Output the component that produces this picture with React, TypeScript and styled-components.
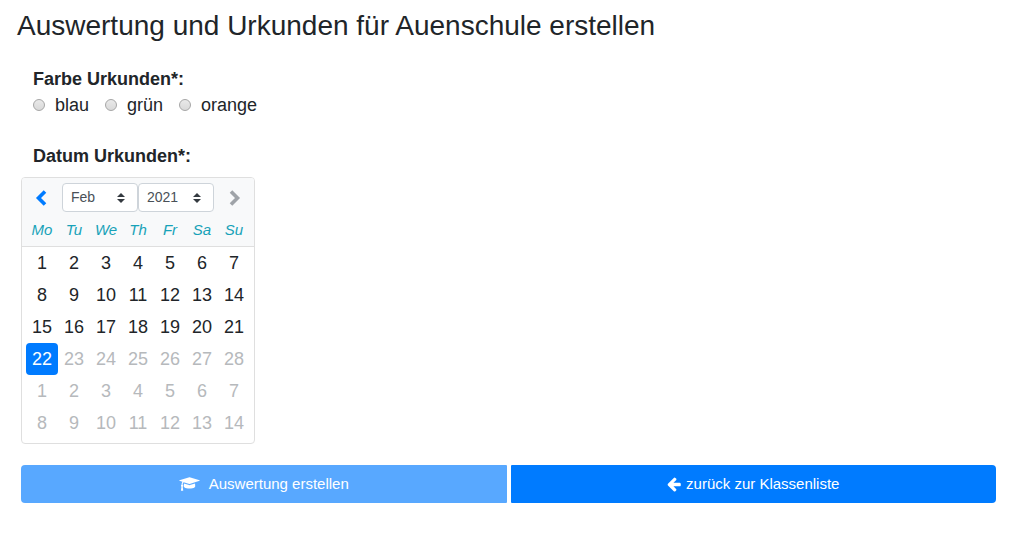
import React, { useState } from "react";
import styled, { createGlobalStyle } from "styled-components";

const GlobalStyle = createGlobalStyle`
  *, *::before, *::after { box-sizing: border-box; }
  body {
    margin: 0;
    background: #fff;
    color: #212529;
    font-family: "Liberation Sans", Arial, sans-serif;
    font-size: 18px;
    line-height: 26px;
  }
  button, input, select { font-family: inherit; margin: 0; }
`;

const Page = styled.main`
  padding: 8px 16px 46px 17px;
`;

const Title = styled.h1`
  margin: 0;
  font-size: 28px;
  font-weight: 400;
  line-height: 36px;
`;

const Form = styled.form`
  padding: 22px 0 0 4px;
`;

const ColorGroup = styled.fieldset`
  margin: 0;
  padding: 0 12px;
  border: 0;
`;

const GroupLabel = styled.legend`
  padding: 0;
  font-weight: 700;
`;

const Choices = styled.div`
  display: flex;
  gap: 16px;
`;

const Choice = styled.label`
  display: flex;
  align-items: center;
  gap: 10px;
`;

const Radio = styled.input`
  appearance: none;
  width: 12px;
  height: 12px;
  border: 1px solid #a6a6a6;
  border-radius: 50%;
  background: linear-gradient(#e9e9e9, #d9d9d9);
  &:checked {
    background: radial-gradient(circle, #444 0 3px, #e0e0e0 3px);
  }
`;

const DateLabel = styled.h2`
  margin: 25px 12px 8px;
  font-size: 18px;
  line-height: 26px;
`;

const Calendar = styled.section`
  width: max-content;
  border: 1px solid #dfdfdf;
  border-radius: 4px;
  overflow: hidden;
`;

const CalendarHeader = styled.div`
  display: flex;
  align-items: center;
  justify-content: space-between;
  padding: 5px 4px 2px;
  background: #f8f9fa;
`;

const NavButton = styled.button`
  display: flex;
  align-items: center;
  justify-content: center;
  width: 30px;
  height: 29px;
  padding: 0;
  border: 0;
  background: transparent;
  color: #007bff;
  &:disabled { color: #9fa3a8; }
`;

const Selects = styled.div`
  display: flex;
`;

const Select = styled.select`
  appearance: none;
  width: 76px;
  height: 29px;
  padding: 0 24px 1px 8px;
  border: 1px solid #ced4da;
  border-radius: 4px;
  background: #fff url("data:image/svg+xml,%3csvg xmlns='http://www.w3.org/2000/svg' viewBox='0 0 4 5'%3e%3cpath fill='%23343a40' d='M2 0L0 2h4zm0 5L0 3h4z'/%3e%3c/svg%3e") no-repeat right 12px center / 8px 10px;
  color: #495057;
  font-size: 14px;
  line-height: 20px;
`;

const Month = styled.table`
  border-collapse: collapse;
`;

const Weekdays = styled.thead`
  background: #f8f9fa;
  border-bottom: 1px solid #dfdfdf;
`;

const Cell = styled.td`
  padding: 0;
  &:first-child { padding-left: 4px; }
  &:last-child { padding-right: 4px; }
`;

const Weekday = styled(Cell).attrs({ as: "th", scope: "col" })`
  height: 32px;
  color: #17a2b8;
  font-size: 15px;
  font-style: italic;
  font-weight: 400;
  line-height: 32px;
`;

const Day = styled.button<{ $selected: boolean }>`
  display: block;
  width: 32px;
  height: 32px;
  padding: 0;
  border: 0;
  border-radius: 4px;
  background: ${(p) => (p.$selected ? "#007bff" : "transparent")};
  color: ${(p) => (p.$selected ? "#fff" : "#212529")};
  font-size: 18px;
  line-height: 32px;
  &:disabled { color: #b6b9bc; }
`;

const Weeks = styled.tbody`
  &::after {
    content: "";
    display: block;
    height: 4px;
  }
`;

const Actions = styled.div`
  display: flex;
  gap: 4px;
  padding-top: 21px;
`;

const Action = styled.button<{ $side: "left" | "right" }>`
  flex: 1 1 0;
  display: flex;
  align-items: center;
  justify-content: center;
  gap: ${(p) => (p.$side === "left" ? 9 : 4)}px;
  height: 38px;
  padding: 0 12px;
  border: 0;
  border-radius: ${(p) => (p.$side === "left" ? "4px 1px 1px 4px" : "1px 4px 4px 1px")};
  background: #007bff;
  color: #fff;
  font-size: 15px;
  line-height: 24px;
  &:disabled { opacity: 0.65; }
`;

const colors = ["blau", "grün", "orange"];
const weekdays = ["Mo", "Tu", "We", "Th", "Fr", "Sa", "Su"];
const months = ["Jan", "Feb"];
const years = ["2020", "2021"];
const today = 22;

const weeks = Array.from({ length: 6 }, (_, week) =>
  Array.from({ length: 7 }, (_, day) => {
    const index = week * 7 + day + 1;
    return { index, label: index > 28 ? index - 28 : index };
  })
);

function Chevron({ points }: { points: string }) {
  return (
    <svg width="12" height="18" viewBox="0 0 12 18" fill="none" stroke="currentColor" strokeWidth="3.6" aria-hidden="true">
      <polyline points={points} />
    </svg>
  );
}

function GraduationCap() {
  return (
    <svg width="21" height="16" viewBox="0 0 2304 1792" fill="currentColor" aria-hidden="true">
      <path d="M1774 836l18 316q4 69-82 128t-235 93.5-323 34.5-323-34.5-235-93.5-82-128l18-316 574 181q22 7 48 7t48-7zM2304 512q0 23-22 31l-1120 352q-4 1-10 1t-10-1l-652-206q-43 34-71 111.5t-34 178.5q63 36 63 109 0 69-58 107l58 433q2 14-8 25-9 11-24 11h-192q-15 0-24-11-10-11-8-25l58-433q-58-38-58-107 0-73 65-111 11-207 98-330l-333-104q-22-8-22-31t22-31l1120-352q4-1 10-1t10 1l1120 352q22 8 22 31z" />
    </svg>
  );
}

function ArrowLeft() {
  return (
    <svg width="15" height="16" viewBox="128 0 1664 1792" fill="currentColor" aria-hidden="true">
      <path d="M1664 896v128q0 53-32.5 90.5t-84.5 37.5h-704l293 294q38 36 38 90t-38 90l-75 76q-37 37-90 37-52 0-91-37l-651-652q-37-37-37-90 0-52 37-91l651-650q38-38 91-38 52 0 90 38l75 74q38 38 38 91t-38 91l-293 293h704q52 0 84.5 37.5t32.5 90.5z" />
    </svg>
  );
}

export default function App() {
  const [color, setColor] = useState("");
  const [selected, setSelected] = useState(today);

  return (
    <>
      <GlobalStyle />
      <Page>
        <Title>Auswertung und Urkunden für Auenschule erstellen</Title>
        <Form>
          <ColorGroup>
            <GroupLabel>Farbe Urkunden*:</GroupLabel>
            <Choices>
              {colors.map((name) => (
                <Choice key={name}>
                  <Radio type="radio" name="color" value={name} checked={color === name} onChange={() => setColor(name)} />
                  {name}
                </Choice>
              ))}
            </Choices>
          </ColorGroup>

          <DateLabel id="date-label">Datum Urkunden*:</DateLabel>
          <Calendar aria-labelledby="date-label">
            <CalendarHeader>
              <NavButton type="button" aria-label="Previous month">
                <Chevron points="10,2.5 3.5,9 10,15.5" />
              </NavButton>
              <Selects>
                <Select aria-label="Select month" defaultValue="Feb">
                  {months.map((month) => <option key={month}>{month}</option>)}
                </Select>
                <Select aria-label="Select year" defaultValue="2021">
                  {years.map((year) => <option key={year}>{year}</option>)}
                </Select>
              </Selects>
              <NavButton type="button" aria-label="Next month" disabled>
                <Chevron points="2,2.5 8.5,9 2,15.5" />
              </NavButton>
            </CalendarHeader>
            <Month>
              <Weekdays>
                <tr>{weekdays.map((name) => <Weekday key={name}>{name}</Weekday>)}</tr>
              </Weekdays>
              <Weeks>
                {weeks.map((week) => (
                  <tr key={week[0].index}>
                    {week.map(({ index, label }) => (
                      <Cell key={index}>
                        <Day
                          type="button"
                          $selected={index === selected}
                          disabled={index > today}
                          onClick={() => setSelected(index)}
                        >
                          {label}
                        </Day>
                      </Cell>
                    ))}
                  </tr>
                ))}
              </Weeks>
            </Month>
          </Calendar>

          <Actions>
            <Action type="submit" $side="left" disabled>
              <GraduationCap />
              Auswertung erstellen
            </Action>
            <Action type="button" $side="right">
              <ArrowLeft />
              zurück zur Klassenliste
            </Action>
          </Actions>
        </Form>
      </Page>
    </>
  );
}
